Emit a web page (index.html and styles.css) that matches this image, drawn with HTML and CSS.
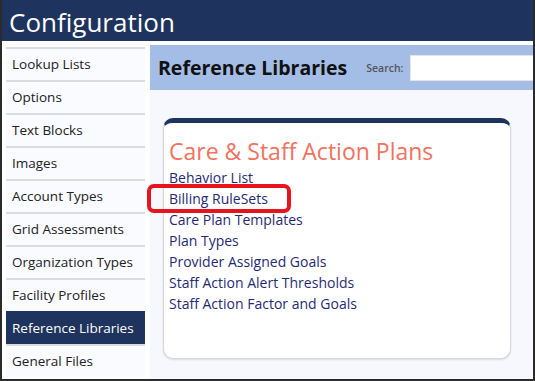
FILE: index.html
```html
<!DOCTYPE html>
<html>
<head>
<meta charset="utf-8">
<link rel="stylesheet" href="styles.css">
</head>
<body>
<div class="frame">
  <header class="top">Configuration</header>
  <div class="content">
    <nav class="side">
      <div class="item">Lookup Lists</div>
      <div class="item">Options</div>
      <div class="item">Text Blocks</div>
      <div class="item">Images</div>
      <div class="item">Account Types</div>
      <div class="item">Grid Assessments</div>
      <div class="item">Organization Types</div>
      <div class="item">Facility Profiles</div>
      <div class="item active">Reference Libraries</div>
      <div class="item">General Files</div>
    </nav>
    <main class="main">
      <div class="bar">
        <h1 class="bar-title">Reference Libraries</h1>
        <span class="search-label">Search:</span>
        <input class="search" type="text">
      </div>
      <div class="body">
        <section class="card">
          <h2 class="card-title">Care &amp; Staff Action Plans</h2>
          <ul class="links">
            <li>Behavior List</li>
            <li class="marked">Billing RuleSets<span class="ring"></span></li>
            <li>Care Plan Templates</li>
            <li>Plan Types</li>
            <li>Provider Assigned Goals</li>
            <li>Staff Action Alert Thresholds</li>
            <li>Staff Action Factor and Goals</li>
          </ul>
        </section>
      </div>
    </main>
  </div>
</div>
</body>
</html>
```

FILE: styles.css
```css
* { box-sizing: border-box; }
html, body { margin: 0; padding: 0; }
body {
  width: 535px;
  height: 381px;
  overflow: hidden;
  font-family: "Open Sans", "Noto Sans", sans-serif;
  background: #fff;
}
.frame {
  width: 535px;
  height: 381px;
  border: 2px solid #2b2b2b;
  border-top: none;
  display: flex;
  flex-direction: column;
  overflow: hidden;
}
.top {
  height: 41px;
  background: #1e335e;
  color: #fff;
  font-size: 26px;
  line-height: 44px;
  padding-left: 7px;
  flex: none;
}
.content {
  display: flex;
  flex: 1;
  padding-top: 4px;
  min-height: 0;
}
.side {
  width: 139px;
  margin-left: 4px;
  margin-top: 2px;
  flex: none;
  display: flex;
  flex-direction: column;
}
.item {
  height: 33px;
  flex: none;
  border-top: 2px solid #dcdcdc;
  background: #fafbfe;
  font-size: 13.5px;
  color: #222;
  padding-left: 6px;
  line-height: 31px;
  white-space: nowrap;
}
.item.active {
  background: #1e335e;
  color: #fff;
  border-top-color: #1e335e;
}
.main {
  flex: 1;
  margin-left: 5px;
  display: flex;
  flex-direction: column;
  min-width: 0;
}
.bar {
  height: 45px;
  background: #a3bde7;
  display: flex;
  align-items: center;
  padding-left: 8px;
  flex: none;
}
.bar-title {
  margin: 0;
  font-size: 19.5px;
  font-weight: 700;
  color: #111;
  white-space: nowrap;
}
.search-label {
  font-size: 10.5px;
  color: #555;
  margin-left: 19px;
  font-weight: 600;
}
.search {
  margin-left: 7px;
  height: 26px;
  flex: 1;
  min-width: 0;
  border: 1px solid #e4e4e4;
  background: #fff;
  margin-right: -4px;
}
.body {
  flex: 1;
  background: #f6f8fd;
  padding: 28px 22px 0 13px;
}
.card {
  height: 241px;
  background: #fff;
  border: 1px solid #d5d8de;
  border-top: 5px solid #1e335e;
  border-radius: 10px;
  box-shadow: 0 1px 2px rgba(0,0,0,0.12);
  padding: 14px 5px;
}
.card-title {
  margin: 0 0 1px;
  font-size: 23px;
  font-weight: 400;
  color: #f4715e;
  line-height: 29px;
}
.links {
  list-style: none;
  margin: 0;
  padding: 0;
}
.links li {
  font-size: 14px;
  color: #1f2a7a;
  line-height: 21px;
  white-space: nowrap;
}
.marked { position: relative; }
.ring {
  position: absolute;
  left: -22px;
  top: -4px;
  width: 144px;
  height: 29px;
  border: 4px solid #e8141d;
  border-radius: 7px;
}
```
